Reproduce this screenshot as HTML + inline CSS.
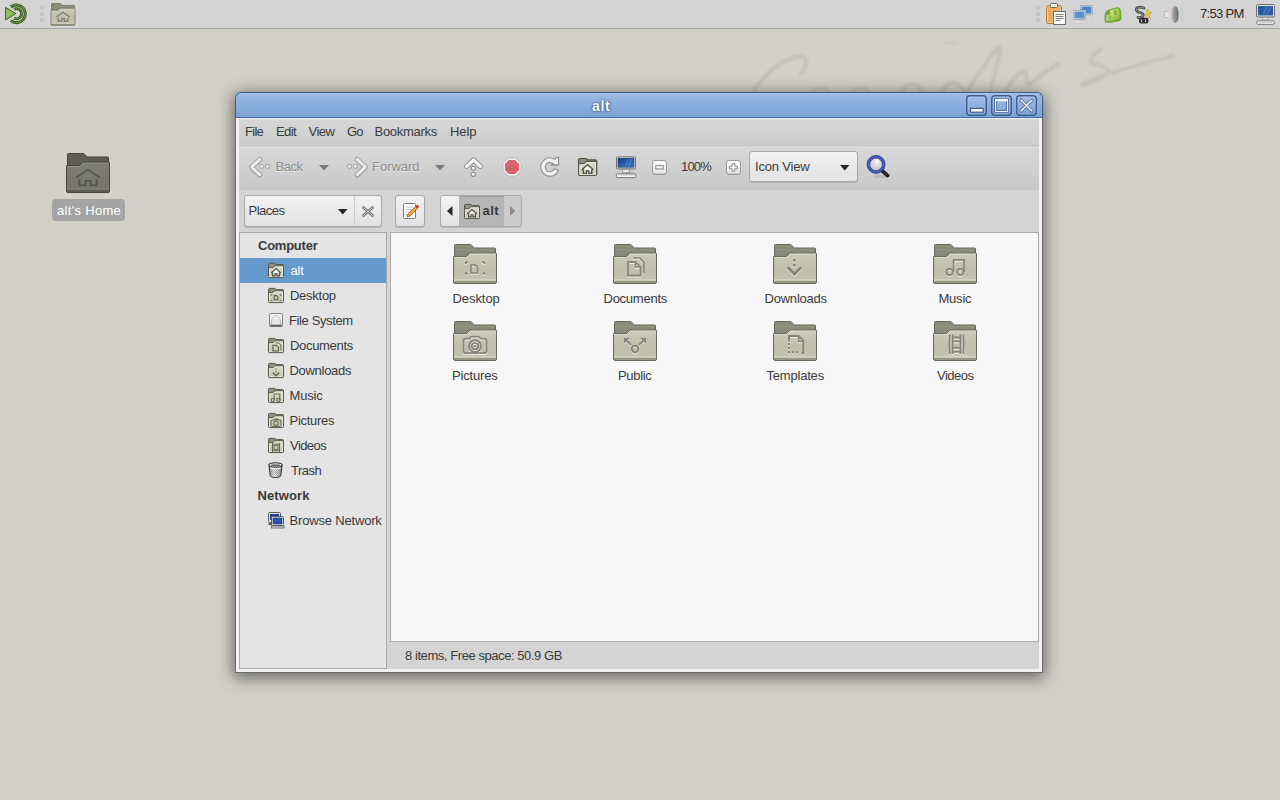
<!DOCTYPE html>
<html><head><meta charset="utf-8">
<style>
*{margin:0;padding:0;box-sizing:border-box}
html,body{width:1280px;height:800px;overflow:hidden}
body{position:relative;background:#d3d0c8;font-family:"Liberation Sans",sans-serif;font-size:13px;color:#3c3c3c}
.a{position:absolute}
.t{position:absolute;white-space:nowrap;line-height:13px;height:13px}
#panel{left:0;top:0;width:1280px;height:29px;background:#d4d4d4;border-bottom:1px solid #a6a6a6}
#shadow{left:235px;top:92px;width:808px;height:581px;box-shadow:0 3px 16px 2px rgba(0,0,0,.5);border-radius:6px 6px 0 0}
#title{left:235px;top:92px;width:808px;height:26px;border:1px solid #3e5f8e;border-bottom:1px solid #4a6b9b;border-radius:6px 6px 0 0;
 background:linear-gradient(#a8c6ec 0,#9ab9e4 2px,#8db0df 40%,#7ca3d6 100%)}
#frame{left:235px;top:118px;width:808px;height:555px;background:#f2f2f2;border:1px solid #6b6b6b;border-top:none}
#client{left:239px;top:118px;width:800px;height:551px;background:#d4d4d4}
#mb{left:239px;top:118px;width:800px;height:27px;background:linear-gradient(#eeeeee 0,#eeeeee 1px,#d6d6d6 1px,#cdcdcd 100%)}
#sep1{left:239px;top:145px;width:800px;height:1px;background:#c2c2c2}
#tb{left:239px;top:146px;width:800px;height:43px;background:linear-gradient(#d8d8d8,#c9c9c9)}
#sep2{left:239px;top:189px;width:800px;height:1px;background:#c6c6c6}
#sidebar{left:239px;top:232px;width:148px;height:437px;background:#e4e4e4;border:1px solid #a9a9a9}
#iconview{left:390px;top:232px;width:649px;height:410px;background:#f7f7f7;border:1px solid #a9a9a9}
.sel{left:240px;top:258px;width:146px;height:25px;background:#6699cc}
.lbl{left:52px;top:199px;width:73px;height:22px;background:#a4a4a4;border-radius:4px}

</style></head>
<body>
<div id="panel" class="a"></div>
<svg class="a" style="left:0;top:0" width="1280" height="120"><defs><filter id="sb" x="-5%" y="-20%" width="110%" height="140%"><feGaussianBlur stdDeviation="1"/></filter></defs><g fill="none" stroke="#c4c1b9" stroke-width="4.2" stroke-linecap="round" stroke-linejoin="round" filter="url(#sb)">
<path d="M752,94 C760,80 775,62 796,57 C807,55 810,63 801,73"/>
<path d="M810,98 Q822,78 834,98 M850,98 Q862,78 874,98 M898,98 Q912,70 926,98 M938,98 Q953,68 968,98"/>
<path d="M966,94 C975,78 992,54 998,48 C1003,44 998,62 993,80 L990,92"/>
<path d="M1006,90 C1012,80 1020,70 1025,72 C1028,76 1024,84 1030,84 C1038,78 1050,68 1058,64"/>
<path d="M1101,49 C1095,54 1087,60 1092,63 C1100,66 1112,68 1107,73 C1100,80 1085,86 1082,85 C1082,80 1120,70 1172,56" stroke-width="3.8"/>
<path d="M946,43 H957" stroke-width="1.5"/>
</g></svg>
<div class="a lbl"></div>
<div id="shadow" class="a"></div>
<div id="title" class="a"></div>
<div id="frame" class="a"></div>
<div id="client" class="a"></div>
<div id="mb" class="a"></div>
<div id="sep1" class="a"></div>
<div id="tb" class="a"></div>
<div id="sep2" class="a"></div>
<div id="sidebar" class="a"></div>
<div class="a sel"></div>
<div id="iconview" class="a"></div>
<svg width="0" height="0" style="position:absolute"><defs>
<linearGradient id="fg" x1="0" y1="0" x2="0" y2="1"><stop offset="0" stop-color="#cdcdbb"/><stop offset=".5" stop-color="#bfbfab"/><stop offset="1" stop-color="#c3c3b0"/></linearGradient>
<linearGradient id="fgd" x1="0" y1="0" x2="0" y2="1"><stop offset="0" stop-color="#7e7e71"/><stop offset="1" stop-color="#727266"/></linearGradient>
</defs></svg>
<svg class="a" style="left:450px;top:240px;overflow:visible" width="50.00" height="50.00" viewBox="0 0 50 50"><g transform="translate(0,0)"><path d="M4.5,19 L4.5,5.5 Q4.5,4.5 5.5,4.5 L20.8,4.5 L24.3,8 L44.5,8 Q45.5,8 45.5,9 L45.5,19 Z" fill="#8b8b79" stroke="#6a6a5b" stroke-width="1.0"/><rect x="5" y="9" width="40" height="1.2" fill="rgba(255,255,255,.08)"/><path d="M3.5,17 Q3.5,16.5 4,16.5 L16.5,16.5 L20,13 L45.8,13 Q46.5,13 46.5,13.7 L46.5,42 Q46.5,43.5 45,43.5 L5,43.5 Q3.5,43.5 3.5,42 Z" fill="url(#fg)" stroke="#6a6a5b" stroke-width="1.0"/><path d="M4,17.5 L16.8,17.5 L20.3,14 L46,14" fill="none" stroke="rgba(255,255,255,0.35)" stroke-width="1"/><rect x="4" y="39.3" width="42" height="1" fill="rgba(255,255,255,0.35)"/><rect x="4" y="41" width="42" height="2.2" fill="#727262" opacity=".55"/><g fill="none" stroke-linecap="butt"><g transform="translate(0,1)" stroke="rgba(255,255,250,.75)" fill="none"><path stroke-width="1.60" d="M15.8,24 V22.3 H18 M32,22.3 H34.2 V24 M15.8,32 V33.8 H18 M32,33.8 H34.2 V32"/><path stroke-width="1.70" d="M21,25 H25.2 L27.6,27.4 V33 H21 Z"/></g><g stroke="#85857a" fill="none"><path stroke-width="1.60" d="M15.8,24 V22.3 H18 M32,22.3 H34.2 V24 M15.8,32 V33.8 H18 M32,33.8 H34.2 V32"/><path stroke-width="1.70" d="M21,25 H25.2 L27.6,27.4 V33 H21 Z"/></g></g></g></svg>
<svg class="a" style="left:610px;top:240px;overflow:visible" width="50.00" height="50.00" viewBox="0 0 50 50"><g transform="translate(0,0)"><path d="M4.5,19 L4.5,5.5 Q4.5,4.5 5.5,4.5 L20.8,4.5 L24.3,8 L44.5,8 Q45.5,8 45.5,9 L45.5,19 Z" fill="#8b8b79" stroke="#6a6a5b" stroke-width="1.0"/><rect x="5" y="9" width="40" height="1.2" fill="rgba(255,255,255,.08)"/><path d="M3.5,17 Q3.5,16.5 4,16.5 L16.5,16.5 L20,13 L45.8,13 Q46.5,13 46.5,13.7 L46.5,42 Q46.5,43.5 45,43.5 L5,43.5 Q3.5,43.5 3.5,42 Z" fill="url(#fg)" stroke="#6a6a5b" stroke-width="1.0"/><path d="M4,17.5 L16.8,17.5 L20.3,14 L46,14" fill="none" stroke="rgba(255,255,255,0.35)" stroke-width="1"/><rect x="4" y="39.3" width="42" height="1" fill="rgba(255,255,255,0.35)"/><rect x="4" y="41" width="42" height="2.2" fill="#727262" opacity=".55"/><g fill="none" stroke-linecap="butt"><g transform="translate(0,1)" stroke="rgba(255,255,250,.75)" fill="none"><path stroke-width="1.70" d="M23.5,18 H29.6 L34,22.4 V33.5"/><path stroke-width="1.80" d="M18,22 H25.5 L30.5,27 V35.5 H18 Z"/><path stroke-width="1.60" d="M25.5,22 V27 H30.5"/></g><g stroke="#85857a" fill="none"><path stroke-width="1.70" d="M23.5,18 H29.6 L34,22.4 V33.5"/><path stroke-width="1.80" d="M18,22 H25.5 L30.5,27 V35.5 H18 Z"/><path stroke-width="1.60" d="M25.5,22 V27 H30.5"/></g></g></g></svg>
<svg class="a" style="left:770px;top:240px;overflow:visible" width="50.00" height="50.00" viewBox="0 0 50 50"><g transform="translate(0,0)"><path d="M4.5,19 L4.5,5.5 Q4.5,4.5 5.5,4.5 L20.8,4.5 L24.3,8 L44.5,8 Q45.5,8 45.5,9 L45.5,19 Z" fill="#8b8b79" stroke="#6a6a5b" stroke-width="1.0"/><rect x="5" y="9" width="40" height="1.2" fill="rgba(255,255,255,.08)"/><path d="M3.5,17 Q3.5,16.5 4,16.5 L16.5,16.5 L20,13 L45.8,13 Q46.5,13 46.5,13.7 L46.5,42 Q46.5,43.5 45,43.5 L5,43.5 Q3.5,43.5 3.5,42 Z" fill="url(#fg)" stroke="#6a6a5b" stroke-width="1.0"/><path d="M4,17.5 L16.8,17.5 L20.3,14 L46,14" fill="none" stroke="rgba(255,255,255,0.35)" stroke-width="1"/><rect x="4" y="39.3" width="42" height="1" fill="rgba(255,255,255,0.35)"/><rect x="4" y="41" width="42" height="2.2" fill="#727262" opacity=".55"/><g fill="none" stroke-linecap="butt"><g transform="translate(0,1)" stroke="rgba(255,255,250,.75)" fill="none"><path stroke-width="0.00" fill="rgba(255,255,250,.75)" d="M23.1,19 H25.7 V21.6 H23.1 Z M23.1,24 H25.7 V26.6 H23.1 Z"/><path stroke-width="2.80" d="M17.6,27.3 L24.4,34.1 L31.2,27.3"/></g><g stroke="#85857a" fill="none"><path stroke-width="0.00" fill="#85857a" d="M23.1,19 H25.7 V21.6 H23.1 Z M23.1,24 H25.7 V26.6 H23.1 Z"/><path stroke-width="2.80" d="M17.6,27.3 L24.4,34.1 L31.2,27.3"/></g></g></g></svg>
<svg class="a" style="left:930px;top:240px;overflow:visible" width="50.00" height="50.00" viewBox="0 0 50 50"><g transform="translate(0,0)"><path d="M4.5,19 L4.5,5.5 Q4.5,4.5 5.5,4.5 L20.8,4.5 L24.3,8 L44.5,8 Q45.5,8 45.5,9 L45.5,19 Z" fill="#8b8b79" stroke="#6a6a5b" stroke-width="1.0"/><rect x="5" y="9" width="40" height="1.2" fill="rgba(255,255,255,.08)"/><path d="M3.5,17 Q3.5,16.5 4,16.5 L16.5,16.5 L20,13 L45.8,13 Q46.5,13 46.5,13.7 L46.5,42 Q46.5,43.5 45,43.5 L5,43.5 Q3.5,43.5 3.5,42 Z" fill="url(#fg)" stroke="#6a6a5b" stroke-width="1.0"/><path d="M4,17.5 L16.8,17.5 L20.3,14 L46,14" fill="none" stroke="rgba(255,255,255,0.35)" stroke-width="1"/><rect x="4" y="39.3" width="42" height="1" fill="rgba(255,255,255,0.35)"/><rect x="4" y="41" width="42" height="2.2" fill="#727262" opacity=".55"/><g fill="none" stroke-linecap="butt"><g transform="translate(0,1)" stroke="rgba(255,255,250,.75)" fill="none"><path stroke-width="1.80" d="M23.5,32 V19.8 H34 V32"/><circle stroke-width="1.80" cx="19.6" cy="32" r="3.2"/><circle stroke-width="1.80" cx="30.4" cy="32" r="3.2"/></g><g stroke="#85857a" fill="none"><path stroke-width="1.80" d="M23.5,32 V19.8 H34 V32"/><circle stroke-width="1.80" cx="19.6" cy="32" r="3.2"/><circle stroke-width="1.80" cx="30.4" cy="32" r="3.2"/></g></g></g></svg>
<svg class="a" style="left:450px;top:317px;overflow:visible" width="50.00" height="50.00" viewBox="0 0 50 50"><g transform="translate(0,0)"><path d="M4.5,19 L4.5,5.5 Q4.5,4.5 5.5,4.5 L20.8,4.5 L24.3,8 L44.5,8 Q45.5,8 45.5,9 L45.5,19 Z" fill="#8b8b79" stroke="#6a6a5b" stroke-width="1.0"/><rect x="5" y="9" width="40" height="1.2" fill="rgba(255,255,255,.08)"/><path d="M3.5,17 Q3.5,16.5 4,16.5 L16.5,16.5 L20,13 L45.8,13 Q46.5,13 46.5,13.7 L46.5,42 Q46.5,43.5 45,43.5 L5,43.5 Q3.5,43.5 3.5,42 Z" fill="url(#fg)" stroke="#6a6a5b" stroke-width="1.0"/><path d="M4,17.5 L16.8,17.5 L20.3,14 L46,14" fill="none" stroke="rgba(255,255,255,0.35)" stroke-width="1"/><rect x="4" y="39.3" width="42" height="1" fill="rgba(255,255,255,0.35)"/><rect x="4" y="41" width="42" height="2.2" fill="#727262" opacity=".55"/><g fill="none" stroke-linecap="butt"><g transform="translate(0,1)" stroke="rgba(255,255,250,.75)" fill="none"><path stroke-width="1.80" d="M19.5,21.6 Q20,19.6 22,19.6 H28 Q30,19.6 30.5,21.6 H33.8 Q36.6,21.6 36.6,24.4 V33.4 Q36.6,36.2 33.8,36.2 H16.2 Q13.4,36.2 13.4,33.4 V24.4 Q13.4,21.6 16.2,21.6 Z"/><circle stroke-width="1.90" cx="25" cy="29.2" r="6"/><circle stroke-width="1.70" cx="25" cy="29.2" r="3.2"/><circle stroke-width="0.00" fill="rgba(255,255,250,.75)" cx="25" cy="29.2" r="1.1"/></g><g stroke="#85857a" fill="none"><path stroke-width="1.80" d="M19.5,21.6 Q20,19.6 22,19.6 H28 Q30,19.6 30.5,21.6 H33.8 Q36.6,21.6 36.6,24.4 V33.4 Q36.6,36.2 33.8,36.2 H16.2 Q13.4,36.2 13.4,33.4 V24.4 Q13.4,21.6 16.2,21.6 Z"/><circle stroke-width="1.90" cx="25" cy="29.2" r="6"/><circle stroke-width="1.70" cx="25" cy="29.2" r="3.2"/><circle stroke-width="0.00" fill="#85857a" cx="25" cy="29.2" r="1.1"/></g></g></g></svg>
<svg class="a" style="left:610px;top:317px;overflow:visible" width="50.00" height="50.00" viewBox="0 0 50 50"><g transform="translate(0,0)"><path d="M4.5,19 L4.5,5.5 Q4.5,4.5 5.5,4.5 L20.8,4.5 L24.3,8 L44.5,8 Q45.5,8 45.5,9 L45.5,19 Z" fill="#8b8b79" stroke="#6a6a5b" stroke-width="1.0"/><rect x="5" y="9" width="40" height="1.2" fill="rgba(255,255,255,.08)"/><path d="M3.5,17 Q3.5,16.5 4,16.5 L16.5,16.5 L20,13 L45.8,13 Q46.5,13 46.5,13.7 L46.5,42 Q46.5,43.5 45,43.5 L5,43.5 Q3.5,43.5 3.5,42 Z" fill="url(#fg)" stroke="#6a6a5b" stroke-width="1.0"/><path d="M4,17.5 L16.8,17.5 L20.3,14 L46,14" fill="none" stroke="rgba(255,255,255,0.35)" stroke-width="1"/><rect x="4" y="39.3" width="42" height="1" fill="rgba(255,255,255,0.35)"/><rect x="4" y="41" width="42" height="2.2" fill="#727262" opacity=".55"/><g fill="none" stroke-linecap="butt"><g transform="translate(0,1)" stroke="rgba(255,255,250,.75)" fill="none"><path stroke-width="2.00" d="M14.8,21.8 L21,28 M35.2,21.8 L29,28"/><path stroke-width="0.00" fill="rgba(255,255,250,.75)" d="M14,21 H19.8 L14,26.8 Z M36,21 H30.2 L36,26.8 Z"/><circle stroke-width="2.00" cx="25" cy="32" r="3.2"/></g><g stroke="#85857a" fill="none"><path stroke-width="2.00" d="M14.8,21.8 L21,28 M35.2,21.8 L29,28"/><path stroke-width="0.00" fill="#85857a" d="M14,21 H19.8 L14,26.8 Z M36,21 H30.2 L36,26.8 Z"/><circle stroke-width="2.00" cx="25" cy="32" r="3.2"/></g></g></g></svg>
<svg class="a" style="left:770px;top:317px;overflow:visible" width="50.00" height="50.00" viewBox="0 0 50 50"><g transform="translate(0,0)"><path d="M4.5,19 L4.5,5.5 Q4.5,4.5 5.5,4.5 L20.8,4.5 L24.3,8 L44.5,8 Q45.5,8 45.5,9 L45.5,19 Z" fill="#8b8b79" stroke="#6a6a5b" stroke-width="1.0"/><rect x="5" y="9" width="40" height="1.2" fill="rgba(255,255,255,.08)"/><path d="M3.5,17 Q3.5,16.5 4,16.5 L16.5,16.5 L20,13 L45.8,13 Q46.5,13 46.5,13.7 L46.5,42 Q46.5,43.5 45,43.5 L5,43.5 Q3.5,43.5 3.5,42 Z" fill="url(#fg)" stroke="#6a6a5b" stroke-width="1.0"/><path d="M4,17.5 L16.8,17.5 L20.3,14 L46,14" fill="none" stroke="rgba(255,255,255,0.35)" stroke-width="1"/><rect x="4" y="39.3" width="42" height="1" fill="rgba(255,255,255,0.35)"/><rect x="4" y="41" width="42" height="2.2" fill="#727262" opacity=".55"/><g fill="none" stroke-linecap="butt"><g transform="translate(0,1)" stroke="rgba(255,255,250,.75)" fill="none"><path stroke-width="2.00" d="M19,24.5 V19 H28.6 L33.2,23.6 V36.2 H31.5"/><path stroke-width="1.80" d="M28.6,19 V24.4 H33.2"/><path stroke-width="0.00" fill="rgba(255,255,250,.75)" d="M18,26 H20 V28 H18 Z M18,30 H20 V32 H18 Z M18,34.2 H20 V36.2 H18 Z M22,34.2 H24 V36.2 H22 Z M26,34.2 H28 V36.2 H26 Z"/></g><g stroke="#85857a" fill="none"><path stroke-width="2.00" d="M19,24.5 V19 H28.6 L33.2,23.6 V36.2 H31.5"/><path stroke-width="1.80" d="M28.6,19 V24.4 H33.2"/><path stroke-width="0.00" fill="#85857a" d="M18,26 H20 V28 H18 Z M18,30 H20 V32 H18 Z M18,34.2 H20 V36.2 H18 Z M22,34.2 H24 V36.2 H22 Z M26,34.2 H28 V36.2 H26 Z"/></g></g></g></svg>
<svg class="a" style="left:930px;top:317px;overflow:visible" width="50.00" height="50.00" viewBox="0 0 50 50"><g transform="translate(0,0)"><path d="M4.5,19 L4.5,5.5 Q4.5,4.5 5.5,4.5 L20.8,4.5 L24.3,8 L44.5,8 Q45.5,8 45.5,9 L45.5,19 Z" fill="#8b8b79" stroke="#6a6a5b" stroke-width="1.0"/><rect x="5" y="9" width="40" height="1.2" fill="rgba(255,255,255,.08)"/><path d="M3.5,17 Q3.5,16.5 4,16.5 L16.5,16.5 L20,13 L45.8,13 Q46.5,13 46.5,13.7 L46.5,42 Q46.5,43.5 45,43.5 L5,43.5 Q3.5,43.5 3.5,42 Z" fill="url(#fg)" stroke="#6a6a5b" stroke-width="1.0"/><path d="M4,17.5 L16.8,17.5 L20.3,14 L46,14" fill="none" stroke="rgba(255,255,255,0.35)" stroke-width="1"/><rect x="4" y="39.3" width="42" height="1" fill="rgba(255,255,255,0.35)"/><rect x="4" y="41" width="42" height="2.2" fill="#727262" opacity=".55"/><g fill="none" stroke-linecap="butt"><g transform="translate(0,1)" stroke="rgba(255,255,250,.75)" fill="none"><path stroke-width="1.80" d="M19.8,17.5 Q18.5,27 19.8,37 M33.2,17.5 Q34.5,27 33.2,37"/><path stroke-width="1.80" d="M22.6,17.5 V37 M30.4,17.5 V37"/><path stroke-width="1.80" d="M22.6,20.5 H30.4 M22.6,24.3 H30.4 M22.6,30.8 H30.4 M22.6,34.8 H30.4"/></g><g stroke="#85857a" fill="none"><path stroke-width="1.80" d="M19.8,17.5 Q18.5,27 19.8,37 M33.2,17.5 Q34.5,27 33.2,37"/><path stroke-width="1.80" d="M22.6,17.5 V37 M30.4,17.5 V37"/><path stroke-width="1.80" d="M22.6,20.5 H30.4 M22.6,24.3 H30.4 M22.6,30.8 H30.4 M22.6,34.8 H30.4"/></g></g></g></svg><svg class="a" style="left:0px;top:0px;overflow:visible" width="32" height="28" viewBox="0 0 32 28"><path d="M10.73,6.98 A8.9,8.9 0 1 1 10.73,20.62" fill="none" stroke="#36511f" stroke-width="3"/><path d="M10.73,6.98 A8.9,8.9 0 1 1 10.73,20.62" fill="none" stroke="#7fae4a" stroke-width="1.3" stroke-dasharray="1.6,.6"/><path d="M14.06,9.30 A5.1,5.1 0 1 1 14.06,18.30" fill="none" stroke="#36511f" stroke-width="2.7"/><path d="M14.06,9.30 A5.1,5.1 0 1 1 14.06,18.30" fill="none" stroke="#7fae4a" stroke-width="1.1" stroke-dasharray="1.4,.6"/><path d="M5.6,7.4 L15.9,13.6 L5.6,19.9 Z" fill="#8fbf5c" stroke="#3c5a24" stroke-width="1"/></svg>
<div class="a" style="left:40px;top:6px;width:4px;height:4px;background:#c6c6c6"></div><div class="a" style="left:40px;top:12px;width:4px;height:4px;background:#c6c6c6"></div><div class="a" style="left:40px;top:18px;width:4px;height:4px;background:#c6c6c6"></div>
<div class="a" style="left:47px;top:0;width:31px;height:28px;background:#d7d7d7"></div>
<svg class="a" style="left:48.7px;top:0.5px;overflow:visible" width="28.00" height="28.00" viewBox="0 0 50 50"><g transform="translate(0,0)"><path d="M4.5,19 L4.5,5.5 Q4.5,4.5 5.5,4.5 L20.8,4.5 L24.3,8 L44.5,8 Q45.5,8 45.5,9 L45.5,19 Z" fill="#8b8b79" stroke="#6a6a5b" stroke-width="1.3"/><rect x="5" y="9" width="40" height="1.2" fill="rgba(255,255,255,.08)"/><path d="M3.5,17 Q3.5,16.5 4,16.5 L16.5,16.5 L20,13 L45.8,13 Q46.5,13 46.5,13.7 L46.5,42 Q46.5,43.5 45,43.5 L5,43.5 Q3.5,43.5 3.5,42 Z" fill="url(#fg)" stroke="#6a6a5b" stroke-width="1.3"/><path d="M4,17.5 L16.8,17.5 L20.3,14 L46,14" fill="none" stroke="rgba(255,255,255,0.35)" stroke-width="1"/><rect x="4" y="39.3" width="42" height="1" fill="rgba(255,255,255,0.35)"/><rect x="4" y="41" width="42" height="2.2" fill="#727262" opacity=".55"/><g fill="none" stroke-linecap="butt"><g transform="translate(0,1)" stroke="rgba(255,255,250,.75)" fill="none"><path stroke-width="3.04" d="M12.8,29 L25,20.6 L37.2,29"/><path stroke-width="3.04" d="M16.3,30.2 V36.4 H22.6 V32 H27.4 V36.4 H33.7 V30.2"/></g><g stroke="#85857a" fill="none"><path stroke-width="3.04" d="M12.8,29 L25,20.6 L37.2,29"/><path stroke-width="3.04" d="M16.3,30.2 V36.4 H22.6 V32 H27.4 V36.4 H33.7 V30.2"/></g></g></g></svg>
<div class="a" style="left:1036px;top:6px;width:4px;height:4px;background:#c6c6c6"></div><div class="a" style="left:1036px;top:12px;width:4px;height:4px;background:#c6c6c6"></div><div class="a" style="left:1036px;top:18px;width:4px;height:4px;background:#c6c6c6"></div>
<svg class="a" style="left:1046px;top:3px;overflow:visible" width="21" height="22" viewBox="0 0 21 22"><rect x="0.5" y="2.5" width="15" height="18" rx="2" fill="#e8ad62" stroke="#b77a2a"/><rect x="1.5" y="3.5" width="13" height="16" rx="1" fill="none" stroke="rgba(255,255,255,.35)"/><rect x="4.5" y="0.5" width="7" height="4" rx="1" fill="#eee" stroke="#666"/><rect x="7.5" y="8.5" width="12" height="13" fill="#fafafa" stroke="#6f6f6f"/><path d="M9.5,11.5 H17.5 M9.5,13.5 H17.5 M9.5,15.5 H17.5 M9.5,17.5 H14.5" stroke="#7a7a7a" stroke-width="1"/></svg>
<svg class="a" style="left:1073px;top:5px;overflow:visible" width="21" height="19" viewBox="0 0 21 19"><rect x="7.5" y="0.5" width="12" height="9" fill="#dfe6ee" stroke="#a9b3bd"/><rect x="8.5" y="1.5" width="10" height="7" fill="#4f86c6"/><path d="M10,11 H18 V13 H10 Z" fill="#e8e8e8" stroke="#b8b8b8" stroke-width=".6"/><rect x="0.5" y="5.5" width="12" height="9" fill="#e4eaf0" stroke="#a9b3bd"/><rect x="1.5" y="6.5" width="10" height="7" fill="#5a93d2"/><path d="M1,16 H13 V18 H1 Z" fill="#ececec" stroke="#bcbcbc" stroke-width=".6"/></svg>
<svg class="a" style="left:1100px;top:4px;overflow:visible" width="26" height="20" viewBox="0 0 26 20"><defs><linearGradient id="gb" x1="0" y1="0" x2="1" y2="1"><stop offset="0" stop-color="#d8ec8a"/><stop offset="1" stop-color="#86b02a"/></linearGradient></defs><path d="M4.5,12 Q5,6.5 9,5.5 L17,3.2 Q20.5,3 21,7 L21.5,14 Q21,17 18,17.5 L12,18.5 L6,18.8 Q4.2,18 4.5,15 Z" fill="#6aa83a"/><path d="M10,6.2 L17.5,4.6 Q19.5,5 19.5,8 L19.8,14.5 L13.5,16.5 L10.5,16 Z" fill="url(#gb)"/><rect x="14.2" y="6.2" width="2.2" height="4.6" fill="#6e9e32" opacity=".8"/><rect x="6" y="10.5" width="6" height="6.5" fill="#b4d67a" opacity=".85"/><rect x="9" y="12" width="2.6" height="4.5" fill="#8cbc3a" opacity=".8"/></svg>
<svg class="a" style="left:1134px;top:5px;overflow:visible" width="18" height="19" viewBox="0 0 18 19"><path d="M10,3 Q4,1 2.5,3.5 Q1.5,6.5 6,7.5 Q10,8.5 9,11 Q8,13 4,12.5" fill="none" stroke="#4a4a4a" stroke-width="2.8" stroke-linecap="round"/><path d="M10,3 Q4,1 2.5,3.5 Q1.5,6.5 6,7.5 Q10,8.5 9,11 Q8,13 4,12.5" fill="none" stroke="#9a9a9a" stroke-width=".9" stroke-linecap="round"/><path d="M12.5,4.5 L17.5,8 L14.6,9.2 L16.5,13.5 L10.5,10 L13.3,8.8 Z" fill="#f5cd2a" stroke="#b08a12" stroke-width=".5"/><rect x="5" y="12.8" width="9.5" height="5.8" rx="2" fill="#2e2e2e"/><path d="M7.5,14.3 V17.3 M11.5,14.3 V17.3" stroke="#c8c8c8" stroke-width="1"/></svg>
<svg class="a" style="left:1164px;top:5px;overflow:visible" width="20" height="19" viewBox="0 0 20 19"><defs><linearGradient id="spk" x1="0" y1="0" x2="1" y2="0"><stop offset="0" stop-color="#f0f0f0"/><stop offset=".45" stop-color="#b0b0b0"/><stop offset="1" stop-color="#5e5e5e"/></linearGradient></defs><rect x="0.8" y="6.5" width="4" height="6" fill="#e6e6e6" stroke="#a0a0a0" stroke-width=".5"/><path d="M4.5,6.5 L10.5,1 Q14.5,1 14.5,9.5 Q14.5,18 10.5,18 L4.5,12.5 Z" fill="url(#spk)"/><ellipse cx="11.5" cy="9.5" rx="2.2" ry="7.5" fill="#8c8c8c" opacity=".5"/><path d="M17.6,2.5 Q19.2,9.5 17.6,16.5" fill="none" stroke="#b8cce4" stroke-width="1"/></svg>
<svg class="a" style="left:1256px;top:4px;overflow:visible" width="19" height="21" viewBox="0 0 19 21"><rect x="0.5" y="0.5" width="18" height="12.5" rx="1.2" fill="#e0e0e0" stroke="#6f6f6f"/><rect x="2" y="2" width="15" height="9.5" fill="#2a5aa6"/><path d="M6,11 L10,2.5 H12 L8,11 Z M10,11 L14,2.5 H15.5 L11.5,11 Z" fill="#7ea6da" opacity=".35"/><rect x="6.5" y="13.5" width="6" height="2.5" fill="#dcdcdc" stroke="#8a8a8a" stroke-width=".6"/><rect x="0.8" y="16.8" width="17.4" height="3.6" rx="1" fill="#ededed" stroke="#737373" stroke-width=".9"/><path d="M2.5,18.4 H16.5" stroke="#a0a0a0" stroke-width=".7" stroke-dasharray="1,.6"/></svg>
<svg class="a" style="left:62.75px;top:149.4px;overflow:visible" width="50.00" height="50.00" viewBox="0 0 50 50"><g transform="translate(0,0)"><path d="M4.5,19 L4.5,5.5 Q4.5,4.5 5.5,4.5 L20.8,4.5 L24.3,8 L44.5,8 Q45.5,8 45.5,9 L45.5,19 Z" fill="#5d5d52" stroke="#45453c" stroke-width="1.0"/><path d="M3.5,17 Q3.5,16.5 4,16.5 L16.5,16.5 L20,13 L45.8,13 Q46.5,13 46.5,13.7 L46.5,42 Q46.5,43.5 45,43.5 L5,43.5 Q3.5,43.5 3.5,42 Z" fill="url(#fgd)" stroke="#45453c" stroke-width="1.0"/><path d="M4,17.5 L16.8,17.5 L20.3,14 L46,14" fill="none" stroke="rgba(255,255,255,0.15)" stroke-width="1"/><rect x="4" y="39.3" width="42" height="1" fill="rgba(255,255,255,0.12)"/><rect x="4" y="41" width="42" height="2.2" fill="#4a4a40" opacity=".55"/><g fill="none" stroke-linecap="butt"><g transform="translate(0,1)" stroke="rgba(140,140,128,.5)" fill="none"><path stroke-width="1.90" d="M12.8,29 L25,20.6 L37.2,29"/><path stroke-width="1.90" d="M16.3,30.2 V36.4 H22.6 V32 H27.4 V36.4 H33.7 V30.2"/></g><g stroke="#55554b" fill="none"><path stroke-width="1.90" d="M12.8,29 L25,20.6 L37.2,29"/><path stroke-width="1.90" d="M16.3,30.2 V36.4 H22.6 V32 H27.4 V36.4 H33.7 V30.2"/></g></g></g></svg>
<svg class="a" style="left:966px;top:95px;overflow:visible" width="21" height="21" viewBox="0 0 21 21"><defs><linearGradient id="tbg" x1="0" y1="0" x2="0" y2="1"><stop offset="0" stop-color="#a3c0e8"/><stop offset="1" stop-color="#7aa1d5"/></linearGradient></defs><rect x="0.75" y="0.75" width="19.5" height="19.5" rx="3.2" fill="url(#tbg)" stroke="#3f5f8c" stroke-width="1.5"/><rect x="2" y="2" width="17" height="17" rx="2.2" fill="none" stroke="rgba(255,255,255,.12)" stroke-width="1"/><rect x="4.6" y="13.4" width="12.6" height="3.8" fill="#f4f8fc" stroke="#3f5f8c" stroke-width="1.2"/></svg>
<svg class="a" style="left:991px;top:95px;overflow:visible" width="21" height="21" viewBox="0 0 21 21"><defs><linearGradient id="tbg" x1="0" y1="0" x2="0" y2="1"><stop offset="0" stop-color="#a3c0e8"/><stop offset="1" stop-color="#7aa1d5"/></linearGradient></defs><rect x="0.75" y="0.75" width="19.5" height="19.5" rx="3.2" fill="url(#tbg)" stroke="#3f5f8c" stroke-width="1.5"/><rect x="2" y="2" width="17" height="17" rx="2.2" fill="none" stroke="rgba(255,255,255,.12)" stroke-width="1"/><rect x="4.6" y="4.4" width="12" height="12.2" fill="none" stroke="#3f5f8c" stroke-width="2.8"/><rect x="4.6" y="4.4" width="12" height="12.2" fill="none" stroke="#f4f8fc" stroke-width="1.2"/><rect x="4.6" y="4.4" width="12" height="1.8" fill="#f4f8fc"/></svg>
<svg class="a" style="left:1016px;top:95px;overflow:visible" width="21" height="21" viewBox="0 0 21 21"><defs><linearGradient id="tbg" x1="0" y1="0" x2="0" y2="1"><stop offset="0" stop-color="#a3c0e8"/><stop offset="1" stop-color="#7aa1d5"/></linearGradient></defs><rect x="0.75" y="0.75" width="19.5" height="19.5" rx="3.2" fill="url(#tbg)" stroke="#3f5f8c" stroke-width="1.5"/><rect x="2" y="2" width="17" height="17" rx="2.2" fill="none" stroke="rgba(255,255,255,.12)" stroke-width="1"/><path d="M5,5 L16,16 M16,5 L5,16" stroke="#3f5f8c" stroke-width="3.1" stroke-linecap="round"/><path d="M5,5 L16,16 M16,5 L5,16" stroke="#f4f8fc" stroke-width="1.6" stroke-linecap="round"/></svg>
<svg class="a" style="left:249px;top:157px;overflow:visible" width="22" height="20" viewBox="0 0 22 20"><path d="M10.8,2.4 L2.5,10 L10.8,17.7" transform="translate(0,1.2)" fill="none" stroke="rgba(0,0,0,.08)" stroke-width="5" stroke-linecap="round" stroke-linejoin="round"/><path d="M10.8,2.4 L2.5,10 L10.8,17.7" fill="none" stroke="#9c9c9c" stroke-width="4.8" stroke-linecap="round" stroke-linejoin="round"/><path d="M10.8,2.4 L2.5,10 L10.8,17.7" fill="none" stroke="#ebebeb" stroke-width="3" stroke-linecap="round" stroke-linejoin="round"/><circle cx="12.5" cy="9.3" r="2.05" fill="#ececec" stroke="#9c9c9c" stroke-width="1"/><circle cx="18.5" cy="9.3" r="2.05" fill="#ececec" stroke="#9c9c9c" stroke-width="1"/></svg>
<svg class="a" style="left:319px;top:165px;overflow:visible" width="10" height="5.5" viewBox="0 0 10 5.5"><path d="M0,0 H10 L5.0,5.5 Z" fill="#7a7a7a"/></svg>
<svg class="a" style="left:346px;top:157px;overflow:visible" width="22" height="20" viewBox="0 0 22 20"><path d="M11.2,2.4 L19.5,10 L11.2,17.7" transform="translate(0,1.2)" fill="none" stroke="rgba(0,0,0,.08)" stroke-width="5" stroke-linecap="round" stroke-linejoin="round"/><path d="M11.2,2.4 L19.5,10 L11.2,17.7" fill="none" stroke="#9c9c9c" stroke-width="4.8" stroke-linecap="round" stroke-linejoin="round"/><path d="M11.2,2.4 L19.5,10 L11.2,17.7" fill="none" stroke="#ebebeb" stroke-width="3" stroke-linecap="round" stroke-linejoin="round"/><circle cx="3.5" cy="9.3" r="2.05" fill="#ececec" stroke="#9c9c9c" stroke-width="1"/><circle cx="9.5" cy="9.3" r="2.05" fill="#ececec" stroke="#9c9c9c" stroke-width="1"/></svg>
<svg class="a" style="left:435px;top:165px;overflow:visible" width="10" height="5.5" viewBox="0 0 10 5.5"><path d="M0,0 H10 L5.0,5.5 Z" fill="#7a7a7a"/></svg>
<svg class="a" style="left:464px;top:156px;overflow:visible" width="20" height="22" viewBox="0 0 20 22"><path d="M2.6,10.4 L9.5,3.9 L16.4,10.4" fill="none" stroke="#8e8e8e" stroke-width="5" stroke-linecap="round" stroke-linejoin="round"/><path d="M2.6,10.4 L9.5,3.9 L16.4,10.4" fill="none" stroke="#f6f6f6" stroke-width="3.2" stroke-linecap="round" stroke-linejoin="round"/><ellipse cx="9.5" cy="19.5" rx="3" ry="1.2" fill="rgba(0,0,0,.1)"/><circle cx="9.3" cy="12.3" r="2.1" fill="#f6f6f6" stroke="#8e8e8e" stroke-width="1.1"/><circle cx="9.3" cy="18.3" r="2.1" fill="#f6f6f6" stroke="#8e8e8e" stroke-width="1.1"/></svg>
<svg class="a" style="left:502px;top:157px;overflow:visible" width="21" height="20" viewBox="0 0 21 20"><path d="M6.3,0.8 H13.7 L19.2,6.3 V13.7 L13.7,19.2 H6.3 L0.8,13.7 V6.3 Z" fill="#ececec" stroke="#b9b9b9" stroke-width="1"/><path d="M7,3 H13 L17,7 V13 L13,17 H7 L3,13 V7 Z" fill="#d9636b"/></svg>
<svg class="a" style="left:536px;top:152px;overflow:visible" width="26" height="26" viewBox="0 0 26 26"><path d="M22.43,18.45 A9.2,9.2 0 1 1 17.05,6.35 L18.9,7.5 L20.6,5.4 L22.6,5.4 L22.6,12.9 L14.8,12.9 L17.39,11.86 A4.7,4.7 0 1 0 18.26,16.76 Z" transform="translate(0,1.3)" fill="rgba(0,0,0,.07)"/><path d="M22.43,18.45 A9.2,9.2 0 1 1 17.05,6.35 L18.9,7.5 L20.6,5.4 L22.6,5.4 L22.6,12.9 L14.8,12.9 L17.39,11.86 A4.7,4.7 0 1 0 18.26,16.76 Z" fill="#f2f2f2" stroke="#8e8e8e" stroke-width="1.1" stroke-linejoin="round"/></svg>
<svg class="a" style="left:578.3px;top:157.5px;overflow:visible" width="19.2" height="19.2" viewBox="0 0 16 16"><defs><linearGradient id="sfg" x1="0" y1="0" x2="0" y2="1"><stop offset="0" stop-color="#dcdccb"/><stop offset="1" stop-color="#c4c4ae"/></linearGradient></defs><path d="M0.5,13 V1.3 Q0.5,0.4 1.5,0.4 H6.8 L8.2,1.6 H14.5 Q15.5,1.6 15.5,2.6 V13 Z" fill="#8e8e7c" stroke="#55554a" stroke-width="1"/><path d="M0.5,4.7 H5 L6.9,2.8 H15.5 V13.6 Q15.5,14.6 14.5,14.6 H1.5 Q0.5,14.6 0.5,13.6 Z" fill="url(#sfg)" stroke="#55554a" stroke-width="1"/><path d="M1.5,5.7 H5.4 L7.3,3.8 H14.5 V13.6 H1.5 Z" fill="none" stroke="rgba(255,255,255,.45)" stroke-width="1"/><path d="M3.2,10 L8,5.6 L12.8,10" fill="none" stroke="#4d4d42" stroke-width="1.3"/><path d="M4.6,9.4 L8,6.4 L11.4,9.4 V12.8 H4.6 Z" fill="#f2f2ea"/><path d="M4.6,9.6 V12.8 H7 V10.8 H9 V12.8 H11.4 V9.6" fill="none" stroke="#4d4d42" stroke-width="1.2"/></svg>
<svg class="a" style="left:615px;top:156px;overflow:visible" width="22" height="23" viewBox="0 0 22 23"><defs><linearGradient id="scr" x1="0" y1="0" x2="1" y2="1"><stop offset="0" stop-color="#163f8c"/><stop offset="1" stop-color="#3a78c8"/></linearGradient></defs><rect x="1.5" y="0.9" width="19" height="12" rx="1.2" fill="#e4e4e4" stroke="#6c6c6c"/><rect x="3" y="2.2" width="16" height="9" fill="url(#scr)" stroke="#0c2a66" stroke-width=".5"/><path d="M10,10 L12.5,3 H13.6 L11.1,10 Z M13,10 L15.5,3 H17 L14.5,10 Z" fill="#8ab0e0" opacity=".35"/><rect x="7.5" y="13.6" width="7" height="3" rx=".6" fill="#f2f2f2" stroke="#7a7a7a" stroke-width=".7"/><ellipse cx="15" cy="16.5" rx="5" ry="1" fill="rgba(0,0,0,.06)"/><rect x="1.3" y="17.8" width="19.4" height="3.8" rx="1" fill="#f4f4f4" stroke="#6f6f6f" stroke-width=".9"/><path d="M3,19 H19" stroke="#9a9a9a" stroke-width=".7" stroke-dasharray="1,.6"/></svg>
<svg class="a" style="left:652px;top:159.5px;overflow:visible" width="15" height="15" viewBox="0 0 15 15"><defs><linearGradient id="zb" x1="0" y1="0" x2="0" y2="1"><stop offset="0" stop-color="#fdfdfd"/><stop offset="1" stop-color="#e4e4e4"/></linearGradient></defs><rect x="0.5" y="0.5" width="14" height="14" rx="2.5" fill="url(#zb)" stroke="#9a9a9a"/><path d="M1.5,13.6 H13.5" stroke="rgba(0,0,0,.12)" stroke-width="1"/><rect x="3.8" y="5.6" width="7.4" height="3.4" fill="#f6f6f6" stroke="#8a8a8a" stroke-width="1"/></svg>
<svg class="a" style="left:725.5px;top:159.5px;overflow:visible" width="15" height="15" viewBox="0 0 15 15"><defs><linearGradient id="zb" x1="0" y1="0" x2="0" y2="1"><stop offset="0" stop-color="#fdfdfd"/><stop offset="1" stop-color="#e4e4e4"/></linearGradient></defs><rect x="0.5" y="0.5" width="14" height="14" rx="2.5" fill="url(#zb)" stroke="#9a9a9a"/><path d="M1.5,13.6 H13.5" stroke="rgba(0,0,0,.12)" stroke-width="1"/><path d="M6.2,3.6 H8.8 V6.2 H11.4 V8.8 H8.8 V11.4 H6.2 V8.8 H3.6 V6.2 H6.2 Z" fill="#f6f6f6" stroke="#8a8a8a" stroke-width="1"/></svg>
<div class="a" style="left:749px;top:151px;width:109px;height:31px;border:1px solid #a9a9a9;border-radius:3px;background:linear-gradient(#f2f2f2,#e2e2e2);box-shadow:0 1px 0 rgba(0,0,0,.12)"></div>
<svg class="a" style="left:840px;top:164.5px;overflow:visible" width="9.5" height="5.5" viewBox="0 0 9.5 5.5"><path d="M0,0 H9.5 L4.75,5.5 Z" fill="#262626"/></svg>
<svg class="a" style="left:866px;top:155px;overflow:visible" width="26" height="26" viewBox="0 0 26 26"><defs><radialGradient id="lens" cx=".55" cy=".3" r=".8"><stop offset="0" stop-color="#fff"/><stop offset=".25" stop-color="#e0e0e0"/><stop offset="1" stop-color="#bdbdbd"/></radialGradient></defs><ellipse cx="14" cy="21.5" rx="7" ry="1.8" fill="rgba(0,0,0,.10)"/><path d="M15.6,15.2 L21.6,20.6" stroke="#1c1c1c" stroke-width="3.8" stroke-linecap="round"/><path d="M16.6,15.6 L21.2,19.8" stroke="#8a8070" stroke-width=".8" stroke-dasharray=".8,.9"/><circle cx="10.06" cy="9.4" r="6.5" fill="url(#lens)"/><circle cx="10.06" cy="9.4" r="7.7" fill="none" stroke="#3548b8" stroke-width="2.8"/><circle cx="10.06" cy="9.4" r="7.6" fill="none" stroke="#7c7ce6" stroke-width=".9" opacity=".7"/><circle cx="10.06" cy="9.4" r="9.05" fill="none" stroke="#23338c" stroke-width=".6"/><circle cx="10.06" cy="9.4" r="6.35" fill="none" stroke="#1f2a6e" stroke-width=".6"/></svg>
<div class="a" style="left:244px;top:195px;width:138px;height:32px;border:1px solid #a9a9a9;border-radius:3px;background:linear-gradient(#f2f2f2,#e2e2e2);box-shadow:0 1px 0 rgba(0,0,0,.12)"></div>
<div class="a" style="left:354px;top:196px;width:1px;height:30px;background:#cfcfcf"></div>
<svg class="a" style="left:338px;top:209px;overflow:visible" width="9.5" height="5.5" viewBox="0 0 9.5 5.5"><path d="M0,0 H9.5 L4.75,5.5 Z" fill="#262626"/></svg>
<svg class="a" style="left:362px;top:206px;overflow:visible" width="12" height="11" viewBox="0 0 12 11"><path d="M1.5,1.5 L10.5,9.5 M10.5,1.5 L1.5,9.5" stroke="#6a6a6a" stroke-width="2.6" stroke-linecap="round"/><path d="M1.5,1.5 L10.5,9.5 M10.5,1.5 L1.5,9.5" stroke="#d8d8d8" stroke-width="1" stroke-linecap="round"/></svg>
<div class="a" style="left:395px;top:195px;width:30px;height:32px;border:1px solid #a9a9a9;border-radius:3px;background:linear-gradient(#f2f2f2,#e2e2e2);box-shadow:0 1px 0 rgba(0,0,0,.12)"></div>
<svg class="a" style="left:403px;top:203px;overflow:visible" width="16" height="16" viewBox="0 0 16 16"><rect x="0.5" y="0.5" width="12" height="15" rx="1" fill="#fdfdfd" stroke="#7a7a7a"/><path d="M2.5,4 H10 M2.5,6.5 H9 M2.5,9 H8 M2.5,11.5 H7" stroke="#b0b0b0" stroke-width=".8"/><path d="M4,14 L5,11 L13,3 L15,5 L7,13 Z" fill="#f0a830" stroke="#8a5a10" stroke-width=".7"/><circle cx="14.2" cy="3.6" r="1.6" fill="#d83030"/></svg>
<div class="a" style="left:440px;top:195px;width:82px;height:32px;border:1px solid #a9a9a9;border-radius:3px;background:#cbcbcb;box-shadow:0 1px 0 rgba(0,0,0,.12);overflow:hidden"><div class="a" style="left:0;top:0;width:18px;height:30px;background:linear-gradient(#f2f2f2,#e2e2e2)"></div><div class="a" style="left:18px;top:0;width:45px;height:30px;background:#b5b5b5;box-shadow:inset 0 1px 1px rgba(0,0,0,.15)"></div></div>
<svg class="a" style="left:447px;top:206px;overflow:visible" width="6" height="10" viewBox="0 0 6 10"><path d="M5.5,0 V10 L0,5 Z" fill="#262626"/></svg>
<svg class="a" style="left:510px;top:206px;overflow:visible" width="6" height="10" viewBox="0 0 6 10"><path d="M0,0 V10 L5.5,5 Z" fill="#8c8c8c"/></svg>
<svg class="a" style="left:464px;top:204px;overflow:visible" width="16.0" height="16.0" viewBox="0 0 16 16"><defs><linearGradient id="sfg" x1="0" y1="0" x2="0" y2="1"><stop offset="0" stop-color="#dcdccb"/><stop offset="1" stop-color="#c4c4ae"/></linearGradient></defs><path d="M0.5,13 V1.3 Q0.5,0.4 1.5,0.4 H6.8 L8.2,1.6 H14.5 Q15.5,1.6 15.5,2.6 V13 Z" fill="#8e8e7c" stroke="#55554a" stroke-width="1"/><path d="M0.5,4.7 H5 L6.9,2.8 H15.5 V13.6 Q15.5,14.6 14.5,14.6 H1.5 Q0.5,14.6 0.5,13.6 Z" fill="url(#sfg)" stroke="#55554a" stroke-width="1"/><path d="M1.5,5.7 H5.4 L7.3,3.8 H14.5 V13.6 H1.5 Z" fill="none" stroke="rgba(255,255,255,.45)" stroke-width="1"/><path d="M3.2,10 L8,5.6 L12.8,10" fill="none" stroke="#4d4d42" stroke-width="1.3"/><path d="M4.6,9.4 L8,6.4 L11.4,9.4 V12.8 H4.6 Z" fill="#f2f2ea"/><path d="M4.6,9.6 V12.8 H7 V10.8 H9 V12.8 H11.4 V9.6" fill="none" stroke="#4d4d42" stroke-width="1.2"/></svg>
<svg class="a" style="left:268px;top:263px;overflow:visible" width="16.0" height="16.0" viewBox="0 0 16 16"><defs><linearGradient id="sfg" x1="0" y1="0" x2="0" y2="1"><stop offset="0" stop-color="#dcdccb"/><stop offset="1" stop-color="#c4c4ae"/></linearGradient></defs><path d="M0.5,13 V1.3 Q0.5,0.4 1.5,0.4 H6.8 L8.2,1.6 H14.5 Q15.5,1.6 15.5,2.6 V13 Z" fill="#8e8e7c" stroke="#55554a" stroke-width="1"/><path d="M0.5,4.7 H5 L6.9,2.8 H15.5 V13.6 Q15.5,14.6 14.5,14.6 H1.5 Q0.5,14.6 0.5,13.6 Z" fill="url(#sfg)" stroke="#55554a" stroke-width="1"/><path d="M1.5,5.7 H5.4 L7.3,3.8 H14.5 V13.6 H1.5 Z" fill="none" stroke="rgba(255,255,255,.45)" stroke-width="1"/><path d="M3.2,10 L8,5.6 L12.8,10" fill="none" stroke="#4d4d42" stroke-width="1.3"/><path d="M4.6,9.4 L8,6.4 L11.4,9.4 V12.8 H4.6 Z" fill="#f2f2ea"/><path d="M4.6,9.6 V12.8 H7 V10.8 H9 V12.8 H11.4 V9.6" fill="none" stroke="#4d4d42" stroke-width="1.2"/></svg>
<svg class="a" style="left:268px;top:288px;overflow:visible" width="16.0" height="16.0" viewBox="0 0 16 16"><defs><linearGradient id="sfg" x1="0" y1="0" x2="0" y2="1"><stop offset="0" stop-color="#dcdccb"/><stop offset="1" stop-color="#c4c4ae"/></linearGradient></defs><path d="M0.5,13 V1.3 Q0.5,0.4 1.5,0.4 H6.8 L8.2,1.6 H14.5 Q15.5,1.6 15.5,2.6 V13 Z" fill="#8e8e7c" stroke="#55554a" stroke-width="1"/><path d="M0.5,4.7 H5 L6.9,2.8 H15.5 V13.6 Q15.5,14.6 14.5,14.6 H1.5 Q0.5,14.6 0.5,13.6 Z" fill="url(#sfg)" stroke="#55554a" stroke-width="1"/><path d="M1.5,5.7 H5.4 L7.3,3.8 H14.5 V13.6 H1.5 Z" fill="none" stroke="rgba(255,255,255,.45)" stroke-width="1"/><path d="M3,8 V6.6 H4.4 M11.6,6.6 H13 V8 M3,11.6 V13 H4.4 M11.6,13 H13 V11.6" fill="none" stroke="#6a6a5c" stroke-width="1"/><path d="M6.2,7.6 H8.6 L9.8,8.8 V11.8 H6.2 Z" fill="none" stroke="#55554a" stroke-width="1.1"/></svg>
<svg class="a" style="left:268px;top:338px;overflow:visible" width="16.0" height="16.0" viewBox="0 0 16 16"><defs><linearGradient id="sfg" x1="0" y1="0" x2="0" y2="1"><stop offset="0" stop-color="#dcdccb"/><stop offset="1" stop-color="#c4c4ae"/></linearGradient></defs><path d="M0.5,13 V1.3 Q0.5,0.4 1.5,0.4 H6.8 L8.2,1.6 H14.5 Q15.5,1.6 15.5,2.6 V13 Z" fill="#8e8e7c" stroke="#55554a" stroke-width="1"/><path d="M0.5,4.7 H5 L6.9,2.8 H15.5 V13.6 Q15.5,14.6 14.5,14.6 H1.5 Q0.5,14.6 0.5,13.6 Z" fill="url(#sfg)" stroke="#55554a" stroke-width="1"/><path d="M1.5,5.7 H5.4 L7.3,3.8 H14.5 V13.6 H1.5 Z" fill="none" stroke="rgba(255,255,255,.45)" stroke-width="1"/><path d="M7.5,5 H10.8 L13,7.2 V12.5" fill="none" stroke="#6a6a5c" stroke-width="1"/><path d="M5,7.2 H8.4 L10.4,9.2 V13 H5 Z" fill="none" stroke="#5f5f52" stroke-width="1.1"/></svg>
<svg class="a" style="left:268px;top:363px;overflow:visible" width="16.0" height="16.0" viewBox="0 0 16 16"><defs><linearGradient id="sfg" x1="0" y1="0" x2="0" y2="1"><stop offset="0" stop-color="#dcdccb"/><stop offset="1" stop-color="#c4c4ae"/></linearGradient></defs><path d="M0.5,13 V1.3 Q0.5,0.4 1.5,0.4 H6.8 L8.2,1.6 H14.5 Q15.5,1.6 15.5,2.6 V13 Z" fill="#8e8e7c" stroke="#55554a" stroke-width="1"/><path d="M0.5,4.7 H5 L6.9,2.8 H15.5 V13.6 Q15.5,14.6 14.5,14.6 H1.5 Q0.5,14.6 0.5,13.6 Z" fill="url(#sfg)" stroke="#55554a" stroke-width="1"/><path d="M1.5,5.7 H5.4 L7.3,3.8 H14.5 V13.6 H1.5 Z" fill="none" stroke="rgba(255,255,255,.45)" stroke-width="1"/><path d="M8,5.5 V6.8 M8,8 V9.2" stroke="#6a6a5c" stroke-width="1.2"/><path d="M4.8,9.6 L8,12.8 L11.2,9.6" fill="none" stroke="#6a6a5c" stroke-width="1.5"/></svg>
<svg class="a" style="left:268px;top:388px;overflow:visible" width="16.0" height="16.0" viewBox="0 0 16 16"><defs><linearGradient id="sfg" x1="0" y1="0" x2="0" y2="1"><stop offset="0" stop-color="#dcdccb"/><stop offset="1" stop-color="#c4c4ae"/></linearGradient></defs><path d="M0.5,13 V1.3 Q0.5,0.4 1.5,0.4 H6.8 L8.2,1.6 H14.5 Q15.5,1.6 15.5,2.6 V13 Z" fill="#8e8e7c" stroke="#55554a" stroke-width="1"/><path d="M0.5,4.7 H5 L6.9,2.8 H15.5 V13.6 Q15.5,14.6 14.5,14.6 H1.5 Q0.5,14.6 0.5,13.6 Z" fill="url(#sfg)" stroke="#55554a" stroke-width="1"/><path d="M1.5,5.7 H5.4 L7.3,3.8 H14.5 V13.6 H1.5 Z" fill="none" stroke="rgba(255,255,255,.45)" stroke-width="1"/><path d="M6.2,12 V6 H11.8 V12" fill="none" stroke="#6a6a5c" stroke-width="1.1"/><circle cx="4.8" cy="12" r="1.7" fill="none" stroke="#6a6a5c" stroke-width="1.1"/><circle cx="10.4" cy="12" r="1.7" fill="none" stroke="#6a6a5c" stroke-width="1.1"/></svg>
<svg class="a" style="left:268px;top:413px;overflow:visible" width="16.0" height="16.0" viewBox="0 0 16 16"><defs><linearGradient id="sfg" x1="0" y1="0" x2="0" y2="1"><stop offset="0" stop-color="#dcdccb"/><stop offset="1" stop-color="#c4c4ae"/></linearGradient></defs><path d="M0.5,13 V1.3 Q0.5,0.4 1.5,0.4 H6.8 L8.2,1.6 H14.5 Q15.5,1.6 15.5,2.6 V13 Z" fill="#8e8e7c" stroke="#55554a" stroke-width="1"/><path d="M0.5,4.7 H5 L6.9,2.8 H15.5 V13.6 Q15.5,14.6 14.5,14.6 H1.5 Q0.5,14.6 0.5,13.6 Z" fill="url(#sfg)" stroke="#55554a" stroke-width="1"/><path d="M1.5,5.7 H5.4 L7.3,3.8 H14.5 V13.6 H1.5 Z" fill="none" stroke="rgba(255,255,255,.45)" stroke-width="1"/><rect x="3" y="7" width="10" height="6.5" rx="1.2" fill="none" stroke="#6a6a5c" stroke-width="1.1"/><path d="M6,7 V6 H10 V7" fill="none" stroke="#6a6a5c" stroke-width="1"/><circle cx="8" cy="10.2" r="2.2" fill="none" stroke="#6a6a5c" stroke-width="1.1"/></svg>
<svg class="a" style="left:268px;top:438px;overflow:visible" width="16.0" height="16.0" viewBox="0 0 16 16"><defs><linearGradient id="sfg" x1="0" y1="0" x2="0" y2="1"><stop offset="0" stop-color="#dcdccb"/><stop offset="1" stop-color="#c4c4ae"/></linearGradient></defs><path d="M0.5,13 V1.3 Q0.5,0.4 1.5,0.4 H6.8 L8.2,1.6 H14.5 Q15.5,1.6 15.5,2.6 V13 Z" fill="#8e8e7c" stroke="#55554a" stroke-width="1"/><path d="M0.5,4.7 H5 L6.9,2.8 H15.5 V13.6 Q15.5,14.6 14.5,14.6 H1.5 Q0.5,14.6 0.5,13.6 Z" fill="url(#sfg)" stroke="#55554a" stroke-width="1"/><path d="M1.5,5.7 H5.4 L7.3,3.8 H14.5 V13.6 H1.5 Z" fill="none" stroke="rgba(255,255,255,.45)" stroke-width="1"/><path d="M4.5,5 V14 M11.5,5 V14" stroke="#6a6a5c" stroke-width="1.1"/><rect x="6" y="7.5" width="4" height="4" fill="none" stroke="#6a6a5c" stroke-width="1"/><path d="M4.5,6.2 H11.5 M4.5,12.8 H11.5" stroke="#6a6a5c" stroke-width="1"/></svg>
<svg class="a" style="left:269px;top:313px;overflow:visible" width="14" height="14" viewBox="0 0 14 14"><defs><linearGradient id="fsg" x1="0" y1="0" x2="0" y2="1"><stop offset="0" stop-color="#fdfdfd"/><stop offset="1" stop-color="#e2e2e2"/></linearGradient></defs><rect x="0.5" y="0.5" width="13" height="13" rx="1.5" fill="url(#fsg)" stroke="#808080" stroke-width="1"/><path d="M1,12.5 H13" stroke="#5a5a5a" stroke-width="1.5"/><path d="M2.5,9.5 Q2.5,2.2 7,2.2 Q11.5,2.2 11.5,9.5" fill="#e8e8e8" stroke="#bdbdbd" stroke-width=".9"/><ellipse cx="7" cy="5" rx="1.6" ry=".9" fill="#fff"/><circle cx="2.6" cy="10" r=".6" fill="#777"/><circle cx="11.4" cy="10" r=".6" fill="#777"/></svg>
<svg class="a" style="left:268px;top:462px;overflow:visible" width="15" height="16" viewBox="0 0 15 16"><defs><linearGradient id="trg" x1="0" y1="0" x2="1" y2="0"><stop offset="0" stop-color="#8a8a8a"/><stop offset=".35" stop-color="#e8e8e8"/><stop offset=".7" stop-color="#c8c8c8"/><stop offset="1" stop-color="#7a7a7a"/></linearGradient><pattern id="mesh" width="2" height="2" patternUnits="userSpaceOnUse"><rect width="1" height="1" fill="#6a6a6a"/><rect x="1" y="1" width="1" height="1" fill="#6a6a6a"/></pattern></defs><path d="M1,3 L2.2,13.8 Q3,15.5 7.5,15.5 Q12,15.5 12.8,13.8 L14,3 Z" fill="url(#trg)" stroke="#333" stroke-width="1"/><rect x="3" y="6.5" width="9" height="7" fill="url(#mesh)" opacity=".45"/><ellipse cx="7.5" cy="3" rx="6.6" ry="2.2" fill="#f2f2f2" stroke="#2e2e2e" stroke-width="1.1"/><ellipse cx="7.5" cy="3.3" rx="4.8" ry="1.1" fill="#6a6a6a"/><path d="M2.2,6 Q7.5,7.6 12.8,6" fill="none" stroke="#f6f6f6" stroke-width="1.1"/></svg>
<svg class="a" style="left:268px;top:512px;overflow:visible" width="16" height="16" viewBox="0 0 16 16"><rect x="0.5" y="0.5" width="12" height="10" rx="1" fill="#e8e8e8" stroke="#5a5a5a" stroke-width="1"/><rect x="2" y="2" width="9" height="6" fill="#1e3f8a"/><rect x="0.5" y="11" width="5" height="2" fill="#5a5a5a"/><rect x="3.5" y="4.5" width="12" height="9" rx="1" fill="#ededed" stroke="#5a5a5a" stroke-width="1"/><rect x="5" y="6" width="9" height="6" fill="#2a55a8" stroke="#0e2a6a" stroke-width=".6"/><rect x="3.5" y="14" width="12.5" height="2" fill="#e0e0e0" stroke="#5a5a5a" stroke-width=".8"/></svg>
<div class="t" id="t_time" style="left:1200.00px;top:7px;letter-spacing:-0.667px;color:#2b2b2b">7:53 PM</div>
<div class="t" id="t_altsHome" style="left:57.00px;top:204px;letter-spacing:0.311px;color:#fff">alt's Home</div>
<div class="t" id="t_title" style="left:592.00px;top:99px;letter-spacing:0.600px;font-weight:bold;font-size:14px;line-height:14px;color:#fff;text-shadow:0 0 1px #2f4f80,0 0 2px #3a5a8a,0 0 3px rgba(40,70,120,.6)">alt</div>
<div class="t" id="t_File" style="left:245.00px;top:125px;letter-spacing:-0.700px;color:#3a3a3a">File</div>
<div class="t" id="t_Edit" style="left:276.00px;top:125px;letter-spacing:-0.567px;color:#3a3a3a">Edit</div>
<div class="t" id="t_View" style="left:308.50px;top:125px;letter-spacing:-0.483px;color:#3a3a3a">View</div>
<div class="t" id="t_Go" style="left:347.00px;top:125px;letter-spacing:-0.900px;color:#3a3a3a">Go</div>
<div class="t" id="t_Bookmarks" style="left:374.50px;top:125px;letter-spacing:-0.275px;color:#3a3a3a">Bookmarks</div>
<div class="t" id="t_Help" style="left:450.00px;top:125px;letter-spacing:-0.100px;color:#3a3a3a">Help</div>
<div class="t" id="t_Back" style="left:275.50px;top:160px;letter-spacing:-0.467px;color:#8c8c8c;text-shadow:0 1px 0 rgba(255,255,255,.6)">Back</div>
<div class="t" id="t_Forward" style="left:372.00px;top:160px;letter-spacing:-0.017px;color:#8c8c8c;text-shadow:0 1px 0 rgba(255,255,255,.6)">Forward</div>
<div class="t" id="t_zoom" style="left:681.00px;top:160px;letter-spacing:-0.800px;color:#3a3a3a">100%</div>
<div class="t" id="t_IconView" style="left:755.00px;top:160px;letter-spacing:-0.188px;color:#3a3a3a">Icon View</div>
<div class="t" id="t_Places" style="left:248.50px;top:204px;letter-spacing:-0.480px;color:#3a3a3a">Places</div>
<div class="t" id="t_altpath" style="left:482.50px;top:204px;letter-spacing:0.450px;font-weight:bold;color:#3a3a3a">alt</div>
<div class="t" id="t_Computer" style="left:258.00px;top:239px;letter-spacing:-0.243px;font-weight:bold;color:#3a3a3a">Computer</div>
<div class="t" id="t_s0" style="left:290.50px;top:264px;letter-spacing:-0.150px;color:#fff">alt</div>
<div class="t" id="t_s1" style="left:290.00px;top:289px;letter-spacing:-0.267px;color:#3a3a3a">Desktop</div>
<div class="t" id="t_s2" style="left:289.00px;top:314px;letter-spacing:-0.385px;color:#3a3a3a">File System</div>
<div class="t" id="t_s3" style="left:290.00px;top:339px;letter-spacing:-0.312px;color:#3a3a3a">Documents</div>
<div class="t" id="t_s4" style="left:289.50px;top:364px;letter-spacing:-0.294px;color:#3a3a3a">Downloads</div>
<div class="t" id="t_s5" style="left:289.50px;top:389px;letter-spacing:-0.200px;color:#3a3a3a">Music</div>
<div class="t" id="t_s6" style="left:289.50px;top:414px;letter-spacing:-0.286px;color:#3a3a3a">Pictures</div>
<div class="t" id="t_s7" style="left:290.00px;top:439px;letter-spacing:-0.560px;color:#3a3a3a">Videos</div>
<div class="t" id="t_s8" style="left:291.00px;top:464px;letter-spacing:-0.525px;color:#3a3a3a">Trash</div>
<div class="t" id="t_Network" style="left:257.50px;top:489px;letter-spacing:0.100px;font-weight:bold;color:#3a3a3a">Network</div>
<div class="t" id="t_s9" style="left:289.50px;top:514px;letter-spacing:-0.177px;color:#3a3a3a">Browse Network</div>
<div class="t" id="t_status" style="left:405.00px;top:649px;letter-spacing:-0.433px;color:#3a3a3a">8 items, Free space: 50.9 GB</div>
<div class="t" id="t_L0" style="left:452.50px;top:292px;letter-spacing:-0.067px;color:#3a3a3a">Desktop</div>
<div class="t" id="t_L1" style="left:603.50px;top:292px;letter-spacing:-0.250px;color:#3a3a3a">Documents</div>
<div class="t" id="t_L2" style="left:764.50px;top:292px;letter-spacing:-0.212px;color:#3a3a3a">Downloads</div>
<div class="t" id="t_L3" style="left:938.50px;top:292px;letter-spacing:-0.225px;color:#3a3a3a">Music</div>
<div class="t" id="t_L4" style="left:452.00px;top:369px;letter-spacing:-0.171px;color:#3a3a3a">Pictures</div>
<div class="t" id="t_L5" style="left:618.00px;top:369px;letter-spacing:-0.320px;color:#3a3a3a">Public</div>
<div class="t" id="t_L6" style="left:766.50px;top:369px;letter-spacing:-0.200px;color:#3a3a3a">Templates</div>
<div class="t" id="t_L7" style="left:937.00px;top:369px;letter-spacing:-0.480px;color:#3a3a3a">Videos</div>
</body></html>
